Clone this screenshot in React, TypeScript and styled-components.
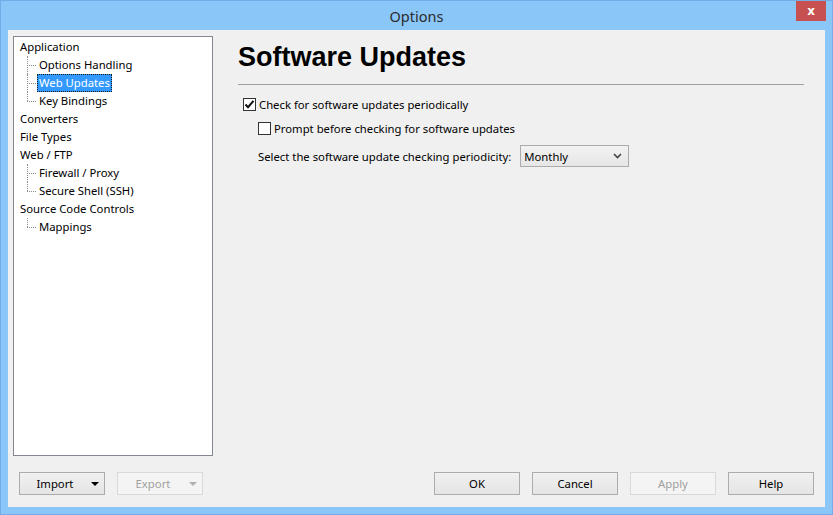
import React, { useState } from "react";
import styled, { createGlobalStyle } from "styled-components";

const GlobalStyle = createGlobalStyle`
  html, body {
    margin: 0;
    padding: 0;
    background: #ffffff;
  }
  * {
    box-sizing: border-box;
  }
`;

const UI_FONT = `"Segoe UI", "Noto Sans", "Open Sans", sans-serif`;

const Window = styled.div`
  width: 833px;
  height: 515px;
  display: flex;
  flex-direction: column;
  background: #8bc6f8;
  border: 1px solid #73ace6;
  font-family: ${UI_FONT};
  font-size: 11.3px;
  color: #000;
  overflow: hidden;
`;

const TitleBar = styled.div`
  position: relative;
  height: 29px;
  display: flex;
  align-items: center;
  justify-content: center;
  flex-shrink: 0;
`;

const Title = styled.span`
  font-size: 14.5px;
  color: #2b2b2b;
`;

const CloseButton = styled.div`
  position: absolute;
  top: -1px;
  right: 6px;
  width: 30px;
  height: 21px;
  background: #c75050;
  color: #fff;
  font-family: "DejaVu Sans", sans-serif;
  font-size: 12px;
  font-weight: bold;
  display: flex;
  align-items: center;
  justify-content: center;
`;

const Client = styled.div`
  flex: 1;
  margin: 0 7px 7px 7px;
  background: #f0f0f0;
  display: flex;
  flex-direction: column;
  padding: 6px 0 12px 5px;
`;

const MainRow = styled.div`
  height: 420px;
  display: flex;
`;

const TreePanel = styled.div`
  width: 200px;
  height: 420px;
  background: #fff;
  border: 1px solid #828790;
  padding: 1px 0 0 4px;
`;

const TreeRow = styled.div<{ $child?: boolean; $last?: boolean }>`
  position: relative;
  height: 18px;
  display: flex;
  align-items: center;
  padding-left: ${({ $child }) => ($child ? "19px" : "0")};

  ${({ $child, $last }) =>
    $child &&
    `
    &::before {
      content: "";
      position: absolute;
      left: 9px;
      top: 9px;
      width: 9px;
      border-top: 1px dotted #8c8c8c;
    }
    &::after {
      content: "";
      position: absolute;
      left: 9px;
      top: 0;
      height: ${$last ? "9px" : "18px"};
      border-left: 1px dotted #8c8c8c;
    }
  `}
`;

const TreeLabel = styled.span<{ $selected?: boolean }>`
  line-height: 16px;
  padding: 0 1px;
  border: 1px solid transparent;
  white-space: nowrap;
  ${({ $selected }) =>
    $selected &&
    `
    background: #3399ff;
    color: #fff;
    border: 1px dotted #1a1a1a;
  `}
`;

const Content = styled.div`
  flex: 1;
  padding: 0 21px 0 25px;
  display: flex;
  flex-direction: column;
`;

const Heading = styled.h1`
  margin: 0;
  padding-top: 6px;
  height: 49px;
  font-family: "Liberation Sans", Arial, sans-serif;
  font-size: 27px;
  font-weight: bold;
  line-height: 30px;
  border-bottom: 1px solid #a0a0a0;
`;

const Options = styled.div`
  display: flex;
  flex-direction: column;
  padding: 11px 0 0 5px;
`;

const CheckRow = styled.label<{ $indent?: number }>`
  display: flex;
  align-items: center;
  height: 17px;
  margin-left: ${({ $indent }) => $indent ?? 0}px;
  margin-bottom: 7px;
  gap: 3px;
  cursor: default;
`;

const Box = styled.span`
  width: 13px;
  height: 13px;
  border: 1px solid #333;
  background: #fff;
  display: flex;
  align-items: center;
  justify-content: center;
  flex-shrink: 0;
`;

const SelectRow = styled.div`
  display: flex;
  align-items: center;
  margin-left: 15px;
  margin-top: 1px;
  gap: 9px;
`;

const SelectBox = styled.div`
  width: 109px;
  height: 22px;
  border: 1px solid #acacac;
  background: linear-gradient(#f2f2f2, #e6e6e6);
  display: flex;
  align-items: center;
  justify-content: space-between;
  padding: 0 6px 0 3px;
`;

const Footer = styled.div`
  display: flex;
  align-items: center;
  margin-top: 16px;
  padding: 0 11px 0 6px;
`;

const ButtonGroup = styled.div`
  display: flex;
  gap: 12px;
`;

const Spacer = styled.div`
  flex: 1;
`;

const Button = styled.button<{ $disabled?: boolean; $dropdown?: boolean }>`
  width: 86px;
  height: 23px;
  font-family: ${UI_FONT};
  font-size: 11.3px;
  padding: 0;
  position: relative;
  display: flex;
  align-items: center;
  justify-content: center;
  color: ${({ $disabled }) => ($disabled ? "#a0a0a0" : "#000")};
  border: 1px solid ${({ $disabled }) => ($disabled ? "#d9d9d9" : "#acacac")};
  background: ${({ $disabled }) =>
    $disabled ? "#f4f4f4" : "linear-gradient(#f0f0f0, #e5e5e5)"};
  padding-right: ${({ $dropdown }) => ($dropdown ? "14px" : "0")};
`;

const Caret = styled.span<{ $disabled?: boolean }>`
  position: absolute;
  right: 5px;
  top: 9px;
  width: 0;
  height: 0;
  border-left: 4px solid transparent;
  border-right: 4px solid transparent;
  border-top: 4px solid ${({ $disabled }) => ($disabled ? "#b0b0b0" : "#000")};
`;

type Node = { label: string; children?: string[] };

const tree: Node[] = [
  { label: "Application", children: ["Options Handling", "Web Updates", "Key Bindings"] },
  { label: "Converters" },
  { label: "File Types" },
  { label: "Web / FTP", children: ["Firewall / Proxy", "Secure Shell (SSH)"] },
  { label: "Source Code Controls", children: ["Mappings"] },
];

const Check = () => (
  <svg width="11" height="11" viewBox="0 0 11 11">
    <path d="M1.5 5.5 L4 8.2 L9.5 1.8" fill="none" stroke="#111" strokeWidth="2" />
  </svg>
);

const Chevron = () => (
  <svg width="9" height="6" viewBox="0 0 9 6">
    <path d="M1 1 L4.5 4.5 L8 1" fill="none" stroke="#444" strokeWidth="1.6" />
  </svg>
);

const App = () => {
  const [selected, setSelected] = useState("Web Updates");
  const [periodic, setPeriodic] = useState(true);
  const [prompt, setPrompt] = useState(false);

  return (
    <>
      <GlobalStyle />
      <Window>
        <TitleBar>
          <Title>Options</Title>
          <CloseButton>x</CloseButton>
        </TitleBar>
        <Client>
          <MainRow>
            <TreePanel>
              {tree.map((node) => (
                <React.Fragment key={node.label}>
                  <TreeRow onClick={() => setSelected(node.label)}>
                    <TreeLabel $selected={selected === node.label}>{node.label}</TreeLabel>
                  </TreeRow>
                  {node.children?.map((child, i) => (
                    <TreeRow
                      key={child}
                      $child
                      $last={i === node.children!.length - 1}
                      onClick={() => setSelected(child)}
                    >
                      <TreeLabel $selected={selected === child}>{child}</TreeLabel>
                    </TreeRow>
                  ))}
                </React.Fragment>
              ))}
            </TreePanel>
            <Content>
              <Heading>Software Updates</Heading>
              <Options>
                <CheckRow onClick={() => setPeriodic((p) => !p)}>
                  <Box>{periodic && <Check />}</Box>
                  <span>Check for software updates periodically</span>
                </CheckRow>
                <CheckRow $indent={15} onClick={() => setPrompt((p) => !p)}>
                  <Box>{prompt && <Check />}</Box>
                  <span>Prompt before checking for software updates</span>
                </CheckRow>
                <SelectRow>
                  <span>Select the software update checking periodicity:</span>
                  <SelectBox>
                    <span>Monthly</span>
                    <Chevron />
                  </SelectBox>
                </SelectRow>
              </Options>
            </Content>
          </MainRow>
          <Footer>
            <ButtonGroup>
              <Button $dropdown>
                Import
                <Caret />
              </Button>
              <Button $dropdown $disabled>
                Export
                <Caret $disabled />
              </Button>
            </ButtonGroup>
            <Spacer />
            <ButtonGroup>
              <Button>OK</Button>
              <Button>Cancel</Button>
              <Button $disabled>Apply</Button>
              <Button>Help</Button>
            </ButtonGroup>
          </Footer>
        </Client>
      </Window>
    </>
  );
};

export default App;
